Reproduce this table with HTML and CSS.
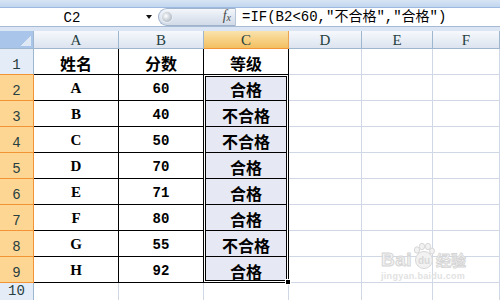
FILE: index.html
```html
<!DOCTYPE html>
<html>
<head>
<meta charset="utf-8">
<link rel="stylesheet" href="styles.css">
</head>
<body>
<div class="app">
  <div class="strip"></div>
  <div class="fbar">
    <div class="namebox"><span class="name">C2</span><span class="dd"></span></div>
    <div class="pill">
      <span class="ball"></span>
      <span class="fx">f<sub>x</sub></span>
    </div>
    <div class="formula">=IF(B2&lt;60,″不合格″,″合格″)</div>
  </div>
  <div class="gap"></div>
  <div class="sheet">
    <div class="corner"><span class="tri"></span></div>
    <div class="ch">A</div><div class="ch">B</div><div class="ch sel">C</div><div class="ch">D</div><div class="ch">E</div><div class="ch">F</div>

    <div class="rh r1">1</div><div class="c t">姓名</div><div class="c t">分数</div><div class="c t">等级</div><div class="c"></div><div class="c"></div><div class="c"></div>
    <div class="rh sel">2</div><div class="c t l">A</div><div class="c t n">60</div><div class="c t s">合格</div><div class="c"></div><div class="c"></div><div class="c"></div>
    <div class="rh sel">3</div><div class="c t l">B</div><div class="c t n">40</div><div class="c t s">不合格</div><div class="c"></div><div class="c"></div><div class="c"></div>
    <div class="rh sel">4</div><div class="c t l">C</div><div class="c t n">50</div><div class="c t s">不合格</div><div class="c"></div><div class="c"></div><div class="c"></div>
    <div class="rh sel">5</div><div class="c t l">D</div><div class="c t n">70</div><div class="c t s">合格</div><div class="c"></div><div class="c"></div><div class="c"></div>
    <div class="rh sel">6</div><div class="c t l">E</div><div class="c t n">71</div><div class="c t s">合格</div><div class="c"></div><div class="c"></div><div class="c"></div>
    <div class="rh sel">7</div><div class="c t l">F</div><div class="c t n">80</div><div class="c t s">合格</div><div class="c"></div><div class="c"></div><div class="c"></div>
    <div class="rh sel">8</div><div class="c t l">G</div><div class="c t n">55</div><div class="c t s">不合格</div><div class="c"></div><div class="c"></div><div class="c"></div>
    <div class="rh sel">9</div><div class="c t l">H</div><div class="c t n">92</div><div class="c t s">合格</div><div class="c"></div><div class="c"></div><div class="c"></div>
    <div class="rh">10</div><div class="c"></div><div class="c"></div><div class="c"></div><div class="c"></div><div class="c"></div><div class="c"></div>

    <div class="selection"><span class="handle"></span></div>
  </div>
  <div class="watermark">
    <div class="wm-top">
      <span class="wm-bai">Bai</span>
      <svg class="paw" width="22" height="26" viewBox="0 0 22 26">
        <ellipse cx="4" cy="7" rx="2.6" ry="3.2" />
        <ellipse cx="9" cy="3.5" rx="2.6" ry="3.2" />
        <ellipse cx="15" cy="3.5" rx="2.6" ry="3.2" />
        <ellipse cx="19" cy="8" rx="2.4" ry="3" />
        <circle cx="11" cy="17" r="8.5" />
        <text x="11" y="21" text-anchor="middle">du</text>
      </svg>
      <span class="wm-jy">经验</span>
    </div>
    <div class="wm-url">jingyan.baidu.com</div>
  </div>
</div>
</body>
</html>
```
FILE: styles.css
```css
html, body {
  margin: 0;
  padding: 0;
  background: #ffffff;
}
.app {
  position: relative;
  width: 500px;
  height: 300px;
  overflow: hidden;
  background: #ffffff;
}
.strip {
  height: 7px;
  background: linear-gradient(#d7e4f4, #c2d6ef);
  border-bottom: 1px solid #9db9df;
}
.fbar {
  height: 18px;
  display: flex;
  background: #ffffff;
  border-bottom: 1px solid #a7bad3;
}
.namebox {
  width: 158px;
  display: flex;
  align-items: center;
  position: relative;
}
.name {
  flex: 1;
  text-align: center;
  font-family: "Liberation Mono", monospace;
  font-size: 14px;
  color: #000;
  padding-left: 6px;
  padding-right: 8px;
  margin-top: 1px;
}
.dd {
  width: 0;
  height: 0;
  border-left: 3.5px solid transparent;
  border-right: 3.5px solid transparent;
  border-top: 4px solid #111;
  margin-right: 6px;
}
.pill {
  width: 78px;
  height: 18px;
  box-sizing: border-box;
  border-radius: 9px 0 0 9px;
  border: 1px solid #9fb3cc;
  border-right: 1px solid #b7c4d6;
  background: linear-gradient(#f4f7fb, #dfe6f0 55%, #d2dbe8);
  display: flex;
  align-items: center;
  justify-content: space-between;
}
.ball {
  width: 10px;
  height: 10px;
  margin-left: 3px;
  border-radius: 50%;
  background: radial-gradient(circle at 40% 40%, #ffffff 0, #d8dde3 35%, #9aa3ad 100%);
  box-shadow: 0 0 0 1px #e9eef4;
}
.fx {
  font-family: "Liberation Serif", serif;
  font-style: italic;
  font-size: 14px;
  color: #4a4a4a;
  margin-right: 4px;
  line-height: 14px;
}
.fx sub {
  font-size: 10px;
  vertical-align: -1px;
}
.formula {
  flex: 1;
  padding-left: 6px;
  font-family: "Liberation Mono", "Noto Sans CJK SC", monospace;
  font-size: 14px;
  line-height: 18px;
  color: #000;
  white-space: nowrap;
}
.gap {
  height: 4px;
  background: #dbe5f3;
}
.sheet {
  position: relative;
  display: grid;
  grid-template-columns: 34px 85px 85px 85px 73px 71px 1fr;
  grid-template-rows: 18px repeat(9, 26px) 1fr;
  height: 269px;
}
.corner {
  box-sizing: border-box;
  background: #aac5ea;
  border-right: 1px solid #9eb6ce;
  border-bottom: 1px solid #9eb6ce;
  display: flex;
  align-items: flex-end;
  justify-content: flex-end;
  padding: 0 2px 2px 0;
}
.tri {
  width: 10px;
  height: 10px;
  background: linear-gradient(135deg, transparent 50%, #dfe9f6 50%);
}
.ch {
  box-sizing: border-box;
  background: linear-gradient(#f6f8fc, #e9eef6 50%, #dde4ef);
  border-right: 1px solid #9eb6ce;
  border-bottom: 1px solid #9eb6ce;
  display: flex;
  align-items: flex-end;
  justify-content: center;
  font-family: "Liberation Serif", serif;
  font-size: 15px;
  line-height: 16px;
  color: #27403f;
}
.ch.sel {
  background: linear-gradient(#fae3ad, #f7d185 50%, #f3bf62);
  border-bottom-color: #f29436;
  border-right-color: #e9a351;
}
.rh {
  box-sizing: border-box;
  background: #e4ecf7;
  border-right: 1px solid #9eb6ce;
  border-bottom: 1px solid #9eb6ce;
  display: flex;
  align-items: flex-end;
  justify-content: center;
  font-family: "Liberation Mono", monospace;
  font-size: 14px;
  line-height: 16px;
  padding-bottom: 1px;
  color: #27403f;
}
.rh.r1 {
  border-bottom-color: #f29436;
}
.rh.sel {
  background: #fed694;
  border-right-color: #f29436;
  border-bottom-color: #f29436;
}
.c {
  box-sizing: border-box;
  border-right: 1px solid #d0d7e5;
  border-bottom: 1px solid #d0d7e5;
}
.c.t {
  border-right-color: #000;
  border-bottom-color: #000;
  display: flex;
  align-items: center;
  justify-content: center;
  padding-top: 2px;
  font-family: "Liberation Mono", "Noto Sans CJK SC", monospace;
  font-weight: bold;
  font-size: 16px;
  color: #000;
}
.c.t.l {
  font-family: "Liberation Serif", serif;
  font-size: 15px;
}
.c.t.n {
  font-size: 14px;
}
.c.s {
  background: #e6e9f3;
}
.selection {
  position: absolute;
  grid-column: 4 / 5;
  grid-row: 3 / 11;
  top: -1px;
  left: -1px;
  right: 0;
  bottom: 0;
  border: 1px solid #000;
  box-shadow: inset 0 0 0 1px #fff, inset 0 0 0 2px #000;
  pointer-events: none;
}
.handle {
  position: absolute;
  right: -3px;
  bottom: -3px;
  width: 4px;
  height: 4px;
  background: #000;
  border: 1px solid #fff;
}
.watermark {
  position: absolute;
  left: 381px;
  top: 243px;
  width: 95px;
  pointer-events: none;
}
.wm-top {
  display: flex;
  align-items: flex-end;
}
.wm-bai {
  font-family: "Liberation Sans", sans-serif;
  font-weight: bold;
  font-size: 19px;
  line-height: 18px;
  color: #f3f3f3;
  -webkit-text-stroke: 1px #d6d6d6;
  letter-spacing: 0.5px;
}
.paw {
  fill: #f2f2f2;
  stroke: #d6d6d6;
  stroke-width: 1;
  margin: 0 1px;
}
.paw text {
  font-family: "Liberation Sans", sans-serif;
  font-weight: bold;
  font-size: 10px;
  fill: #d8d8d8;
  stroke: none;
}
.wm-jy {
  font-family: "Noto Sans CJK SC", sans-serif;
  font-weight: bold;
  font-size: 15px;
  line-height: 18px;
  color: #f3f3f3;
  -webkit-text-stroke: 0.8px #d4d4d4;
}
.wm-url {
  font-family: "Liberation Sans", sans-serif;
  font-size: 9px;
  font-weight: bold;
  color: #e2e2e2;
  margin-top: 2px;
  letter-spacing: 0.3px;
}
```
